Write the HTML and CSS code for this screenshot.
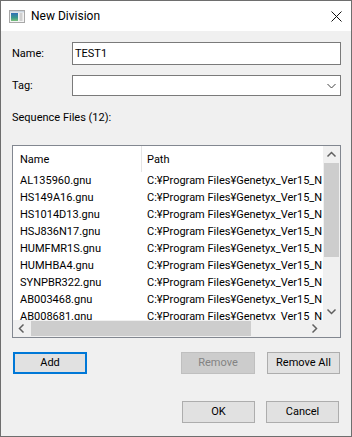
FILE: index.html
```html
<!DOCTYPE html>
<html>
<head>
<meta charset="utf-8">
<link rel="stylesheet" href="styles.css">
</head>
<body>
<div class="window">
  <div class="titlebar">
    <svg class="app-icon" width="16" height="13" viewBox="0 0 16 13">
      <defs>
        <linearGradient id="g1" x1="0" y1="0" x2="0" y2="1">
          <stop offset="0" stop-color="#2f6fb8"/>
          <stop offset="0.6" stop-color="#3a9a8a"/>
          <stop offset="1" stop-color="#7cc07a"/>
        </linearGradient>
      </defs>
      <rect x="0.5" y="0.5" width="15" height="12" fill="#f4f4f4" stroke="#a8a8a8"/>
      <rect x="1" y="1" width="14" height="1.5" fill="#c9d3de"/>
      <rect x="2" y="3" width="7" height="8" fill="url(#g1)"/>
      <rect x="10" y="3" width="4" height="8" fill="#e2e2e2"/>
      <rect x="11.5" y="3" width="1" height="8" fill="#bdbdbd"/>
    </svg>
    <span class="title">New Division</span>
    <svg class="close" width="11" height="11" viewBox="0 0 11 11">
      <path d="M0.5 0.5 L10.5 10.5 M10.5 0.5 L0.5 10.5" stroke="#111" stroke-width="1" fill="none"/>
    </svg>
  </div>
  <div class="body">
    <div class="field-row name-row">
      <label class="field-label">Name:</label>
      <div class="textbox">TEST1</div>
    </div>
    <div class="field-row tag-row">
      <label class="field-label">Tag:</label>
      <div class="combo">
        <span class="combo-text"></span>
        <svg class="combo-arrow" width="17" height="19" viewBox="0 0 17 19">
          <polyline points="4.5,8 8.5,12 12.5,8" fill="none" stroke="#444" stroke-width="1"/>
        </svg>
      </div>
    </div>
    <div class="section-label">Sequence Files (12):</div>
    <div class="listview">
      <div class="lv-main">
        <div class="lv-header">
          <div class="col col-name">Name</div>
          <div class="col col-path">Path</div>
        </div>
        <div class="lv-rows">
          <div class="lv-row"><div class="col col-name">AL135960.gnu</div><div class="col col-path">C:¥Program Files¥Genetyx_Ver15_N</div></div>
          <div class="lv-row"><div class="col col-name">HS149A16.gnu</div><div class="col col-path">C:¥Program Files¥Genetyx_Ver15_N</div></div>
          <div class="lv-row"><div class="col col-name">HS1014D13.gnu</div><div class="col col-path">C:¥Program Files¥Genetyx_Ver15_N</div></div>
          <div class="lv-row"><div class="col col-name">HSJ836N17.gnu</div><div class="col col-path">C:¥Program Files¥Genetyx_Ver15_N</div></div>
          <div class="lv-row"><div class="col col-name">HUMFMR1S.gnu</div><div class="col col-path">C:¥Program Files¥Genetyx_Ver15_N</div></div>
          <div class="lv-row"><div class="col col-name">HUMHBA4.gnu</div><div class="col col-path">C:¥Program Files¥Genetyx_Ver15_N</div></div>
          <div class="lv-row"><div class="col col-name">SYNPBR322.gnu</div><div class="col col-path">C:¥Program Files¥Genetyx_Ver15_N</div></div>
          <div class="lv-row"><div class="col col-name">AB003468.gnu</div><div class="col col-path">C:¥Program Files¥Genetyx_Ver15_N</div></div>
          <div class="lv-row"><div class="col col-name">AB008681.gnu</div><div class="col col-path">C:¥Program Files¥Genetyx_Ver15_N</div></div>
        </div>
      </div>
      <div class="vscroll">
        <div class="sb-btn">
          <svg width="17" height="17" viewBox="0 0 17 17"><polyline points="4.5,10.5 8.5,6.5 12.5,10.5" fill="none" stroke="#606060" stroke-width="1.5"/></svg>
        </div>
        <div class="sb-track sb-track-v"><div class="sb-thumb-v"></div></div>
        <div class="sb-btn">
          <svg width="17" height="17" viewBox="0 0 17 17"><polyline points="4.5,6.5 8.5,10.5 12.5,6.5" fill="none" stroke="#606060" stroke-width="1.5"/></svg>
        </div>
      </div>
      <div class="hscroll">
        <div class="sb-btn">
          <svg width="17" height="17" viewBox="0 0 17 17"><polyline points="10.5,4.5 6.5,8.5 10.5,12.5" fill="none" stroke="#606060" stroke-width="1.5"/></svg>
        </div>
        <div class="sb-track sb-track-h"><div class="sb-thumb-h"></div></div>
        <div class="sb-btn">
          <svg width="17" height="17" viewBox="0 0 17 17"><polyline points="6.5,4.5 10.5,8.5 6.5,12.5" fill="none" stroke="#606060" stroke-width="1.5"/></svg>
        </div>
      </div>
      <div class="sb-corner"></div>
    </div>
    <div class="btn-row list-buttons">
      <button class="btn btn-default">Add</button>
      <span class="spacer"></span>
      <button class="btn btn-disabled" disabled>Remove</button>
      <button class="btn btn-remove-all">Remove All</button>
    </div>
    <div class="btn-row dialog-buttons">
      <button class="btn btn-ok">OK</button>
      <button class="btn btn-cancel">Cancel</button>
    </div>
  </div>
</div>
</body>
</html>
```
FILE: styles.css
```css
* { box-sizing: border-box; }
html, body { margin: 0; padding: 0; background: #f0f0f0; }
body {
  font-family: Roboto, "Noto Sans", "Liberation Sans", sans-serif;
  font-size: 11px;
  color: #000;
}
.window {
  width: 352px;
  height: 437px;
  border: 1px solid #6e6e6e;
  background: #f0f0f0;
  display: flex;
  flex-direction: column;
  overflow: hidden;
}
.titlebar {
  height: 30px;
  flex: none;
  background: #fff;
  display: flex;
  align-items: center;
  padding-left: 8px;
}
.app-icon { flex: none; margin-top: 1px; }
.title {
  font-size: 12px;
  margin-left: 6px;
  flex: 1;
  line-height: 16px;
}
.close { flex: none; margin-right: 9px; }

.body {
  flex: 1;
  padding: 11px 10px 0 11px;
  display: flex;
  flex-direction: column;
}
.field-row {
  display: flex;
  align-items: center;
  flex: none;
}
.name-row { height: 23px; }
.tag-row { height: 21px; margin-top: 10px; }
.field-label {
  width: 60px;
  flex: none;
  line-height: 16px;
}
.textbox {
  flex: 1;
  height: 100%;
  border: 1px solid #7a7a7a;
  background: #fff;
  padding: 0 0 0 2px;
  display: flex;
  align-items: center;
  line-height: 16px;
}
.combo {
  flex: 1;
  height: 100%;
  border: 1px solid #7a7a7a;
  background: #fff;
  display: flex;
  align-items: center;
  justify-content: space-between;
}
.combo-arrow { flex: none; }

.section-label {
  margin-top: 14px;
  line-height: 16px;
  height: 16px;
  flex: none;
}

.listview {
  margin-top: 19px;
  height: 193px;
  flex: none;
  border: 1px solid #828790;
  background: #fff;
  display: grid;
  grid-template-columns: 1fr 17px;
  grid-template-rows: 1fr 17px;
}
.lv-main {
  overflow: hidden;
  min-width: 0;
  min-height: 0;
}
.lv-header {
  height: 26px;
  display: flex;
  align-items: center;
}
.lv-header .col-name {
  border-right: 1px solid #e5e5e5;
  height: 100%;
  display: flex;
  align-items: center;
}
.lv-header .col-path {
  height: 100%;
  display: flex;
  align-items: center;
}
.lv-row {
  height: 17px;
  display: flex;
  align-items: center;
}
.col {
  white-space: nowrap;
  overflow: hidden;
  line-height: 17px;
}
.col-name {
  width: 129px;
  flex: none;
  padding-left: 7px;
}
.col-path {
  flex: 1;
  padding-left: 5px;
  min-width: 0;
}

.vscroll {
  background: #f0f0f0;
  display: flex;
  flex-direction: column;
}
.hscroll {
  background: #f0f0f0;
  display: flex;
}
.sb-btn {
  width: 17px;
  height: 17px;
  flex: none;
}
.sb-btn svg { display: block; }
.sb-track { flex: 1; }
.sb-track-v { padding: 0 1px; }
.sb-thumb-v {
  height: 94px;
  background: #cdcdcd;
}
.sb-track-h { padding: 1px 0 1px 1px; }
.sb-thumb-h {
  width: 220px;
  height: 100%;
  background: #cdcdcd;
}
.sb-corner { background: #f0f0f0; }

.btn-row {
  display: flex;
  flex: none;
  height: 22px;
}
.list-buttons {
  margin-top: 14px;
  padding-left: 1px;
  padding-right: 1px;
}
.spacer { flex: 1; }
.dialog-buttons {
  margin-top: 27px;
  justify-content: flex-end;
  padding-right: 2px;
}
.btn {
  font: inherit;
  color: #000;
  height: 22px;
  padding: 0;
  background: #e1e1e1;
  border: 1px solid #adadad;
  border-radius: 0;
  text-align: center;
  line-height: 16px;
}
.btn-default {
  width: 74px;
  border: 2px solid #0078d7;
}
.btn-disabled {
  width: 74px;
  background: #cccccc;
  border-color: #bfbfbf;
  color: #838383;
}
.btn-remove-all {
  width: 73px;
  margin-left: 12px;
}
.btn-ok { width: 73px; }
.btn-cancel { width: 73px; margin-left: 11px; }
```
